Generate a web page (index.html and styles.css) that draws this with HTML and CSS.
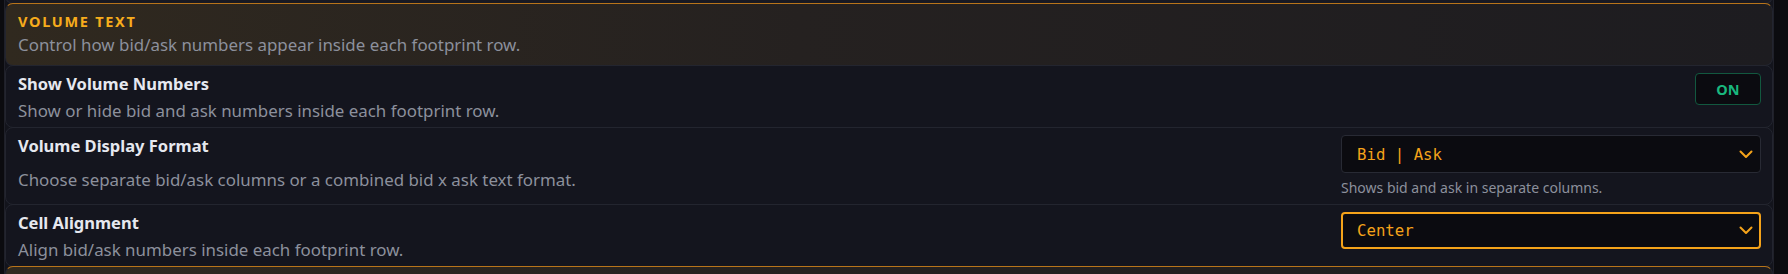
FILE: index.html
```html
<!DOCTYPE html>
<html>
<head>
<meta charset="utf-8">
<link rel="stylesheet" href="styles.css">
</head>
<body>
<div class="panel">
  <div class="card card--prev"></div>

  <div class="card section">
    <div class="section-title">VOLUME TEXT</div>
    <div class="section-desc">Control how bid/ask numbers appear inside each footprint row.</div>
  </div>

  <div class="card row">
    <div class="row-text">
      <div class="row-title">Show Volume Numbers</div>
      <div class="row-desc">Show or hide bid and ask numbers inside each footprint row.</div>
    </div>
    <div class="row-control">
      <button class="toggle">ON</button>
    </div>
  </div>

  <div class="card row row--tall">
    <div class="row-text">
      <div class="row-title">Volume Display Format</div>
      <div class="row-desc">Choose separate bid/ask columns or a combined bid x ask text format.</div>
    </div>
    <div class="row-control">
      <div class="select">
        <span class="select-value">Bid | Ask</span>
        <svg class="chevron" width="14" height="9" viewBox="0 0 14 9"><path d="M1.5 1.5 L7 7 L12.5 1.5" fill="none" stroke="#f5a31a" stroke-width="2" stroke-linecap="round" stroke-linejoin="round"/></svg>
      </div>
      <div class="select-help">Shows bid and ask in separate columns.</div>
    </div>
  </div>

  <div class="card row">
    <div class="row-text">
      <div class="row-title">Cell Alignment</div>
      <div class="row-desc">Align bid/ask numbers inside each footprint row.</div>
    </div>
    <div class="row-control">
      <div class="select select--focus">
        <span class="select-value">Center</span>
        <svg class="chevron" width="14" height="9" viewBox="0 0 14 9"><path d="M1.5 1.5 L7 7 L12.5 1.5" fill="none" stroke="#f5a31a" stroke-width="2" stroke-linecap="round" stroke-linejoin="round"/></svg>
      </div>
    </div>
  </div>

  <div class="card section section--next"></div>
</div>
</body>
</html>
```

FILE: styles.css
```css
html, body {
  margin: 0;
  padding: 0;
  background: #0b0b0f;
  height: 274px;
  overflow: hidden;
}

body {
  font-family: "Noto Sans", "Open Sans", sans-serif;
}

.panel {
  margin: 0 14px 0 4px;
  border-left: 1px solid #1f2029;
  border-right: 1px solid #1f2029;
  background: #13141c;
  height: 274px;
  overflow: hidden;
}

.card {
  border: 1px solid #23252f;
  border-radius: 8px;
  background: #14151e;
}

.card + .card {
  margin-top: -1px;
}

.card--prev {
  height: 12px;
  margin-top: -9px;
  border-top: none;
  border-radius: 0 0 8px 8px;
  background: #181922;
}

.section {
  border-top: 1px solid #b8741a;
  background: linear-gradient(90deg, #30291f 0%, #252120 45%, #1d1c20 100%);
  padding: 7px 12px 6px;
  height: 48px;
}

.section-title {
  color: #f7ac1c;
  font-size: 14.5px;
  font-weight: 700;
  letter-spacing: 1.7px;
  line-height: 20px;
}

.section-desc {
  color: #8c909c;
  font-size: 16.9px;
  line-height: 22px;
  margin-top: 3px;
}

.row {
  display: flex;
  justify-content: space-between;
  align-items: flex-start;
  padding: 6px 11px 5px 12px;
  height: 50px;
}

.row--tall {
  height: 65px;
}

.row-title {
  color: #e6e8ef;
  font-size: 16.5px;
  font-weight: 700;
  line-height: 22px;
  margin-top: 1px;
}

.row-desc {
  color: #8c909c;
  font-size: 16.9px;
  line-height: 22px;
  margin-top: 5px;
}

.row--tall .row-desc {
  margin-top: 12px;
}

.row-control {
  display: flex;
  flex-direction: column;
  align-items: flex-end;
  padding-top: 1px;
}

.toggle {
  width: 66px;
  height: 32px;
  background: #0b0b10;
  border: 1px solid #12583f;
  border-radius: 4px;
  color: #19b87e;
  font-family: "Noto Sans", sans-serif;
  font-weight: 700;
  font-size: 14.5px;
  padding: 0;
}

.select {
  box-sizing: border-box;
  width: 420px;
  height: 38px;
  background: #0b0b10;
  border: 1px solid #282a34;
  border-radius: 4px;
  display: flex;
  align-items: center;
  justify-content: space-between;
  padding: 0 7px 0 15px;
}

.select--focus {
  border: 2px solid #f5a31a;
  height: 37px;
  padding-left: 14px;
  padding-right: 6px;
}

.select-value {
  font-family: "DejaVu Sans Mono", "Liberation Mono", monospace;
  font-size: 15.7px;
  color: #f5a31a;
}

.select-help {
  align-self: flex-start;
  color: #8c909c;
  font-size: 14px;
  line-height: 18px;
  margin-top: 6px;
}

.section--next {
  margin-top: 0;
  height: 20px;
  padding: 0;
}
```
